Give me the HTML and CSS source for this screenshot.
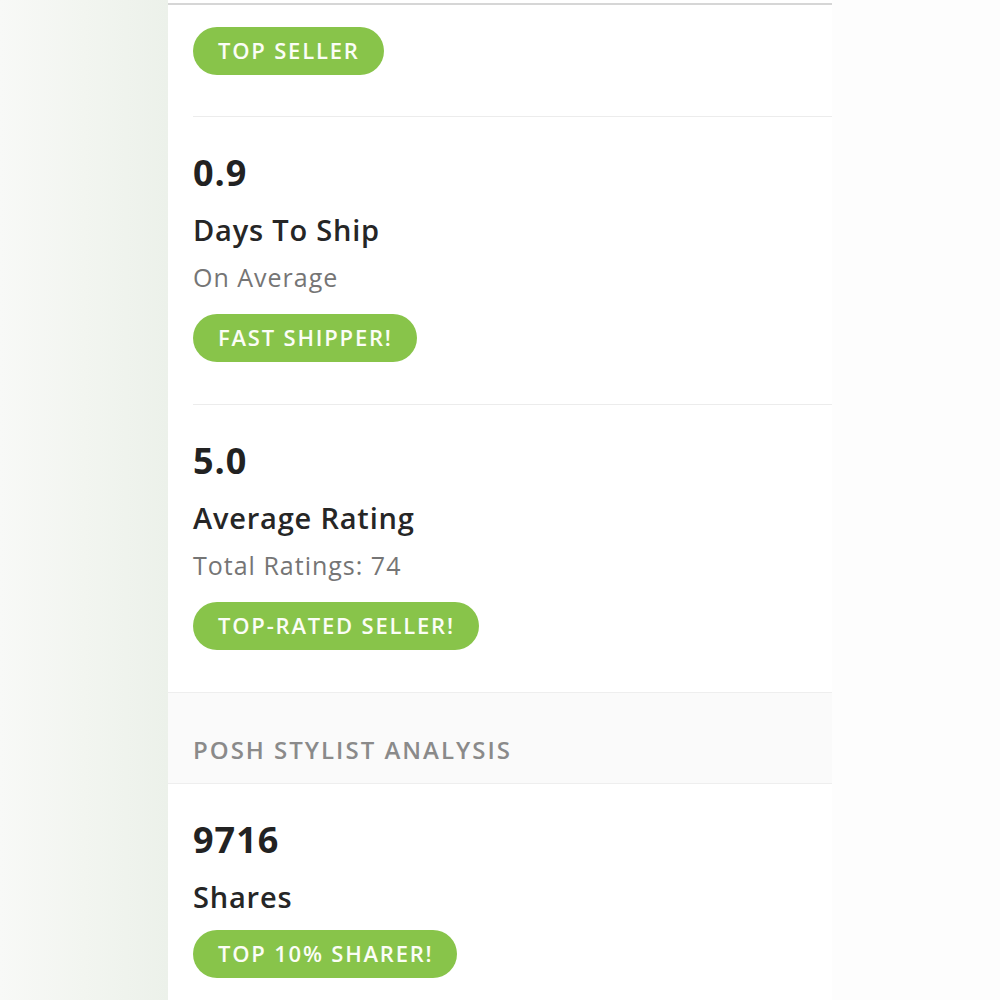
FILE: index.html
```html
<!DOCTYPE html>
<html>
<head>
<meta charset="utf-8">
<link rel="stylesheet" href="styles.css">
</head>
<body>
<div class="page">
  <div class="side side-left"></div>
  <main class="panel">
    <section class="block block-top">
      <span class="pill">TOP SELLER</span>
    </section>
    <section class="block">
      <div class="num">0.9</div>
      <div class="label">Days To Ship</div>
      <div class="sub">On Average</div>
      <span class="pill">FAST SHIPPER!</span>
    </section>
    <section class="block block-last">
      <div class="num">5.0</div>
      <div class="label">Average Rating</div>
      <div class="sub">Total Ratings: 74</div>
      <span class="pill">TOP-RATED SELLER!</span>
    </section>
    <div class="band">POSH STYLIST ANALYSIS</div>
    <section class="block block-last">
      <div class="num">9716</div>
      <div class="label label-tight">Shares</div>
      <span class="pill">TOP 10% SHARER!</span>
    </section>
  </main>
  <div class="side side-right"></div>
</div>
</body>
</html>
```
FILE: styles.css
```css
html, body {
  margin: 0;
  padding: 0;
  height: 1000px;
  overflow: hidden;
  font-family: "Open Sans", "Liberation Sans", sans-serif;
}
.page {
  display: flex;
  height: 1000px;
}
.side {
  width: 168px;
  flex: none;
}
.side-left {
  background: linear-gradient(to right, #f8f9f7 0%, #f2f5f0 50%, #ecf1ea 100%);
}
.side-right {
  background: #fdfdfd;
}
.panel {
  width: 664px;
  flex: none;
  background: #ffffff;
  border-top: 2px solid #d6d6d6;
  margin-top: 3px;
}
.block {
  margin-left: 25px;
  padding: 36px 0 42px;
  border-bottom: 1px solid #ececec;
  display: flex;
  flex-direction: column;
  align-items: flex-start;
}
.block-top {
  padding: 22px 0 41px;
}
.block-last {
  border-bottom: none;
}
.num {
  font-size: 36px;
  line-height: 40px;
  font-weight: 700;
  letter-spacing: 1px;
  color: #222222;
}
.label {
  margin-top: 20px;
  font-size: 29px;
  line-height: 34px;
  font-weight: 600;
  letter-spacing: 0.8px;
  color: #262626;
}
.sub {
  margin-top: 15px;
  font-size: 25px;
  line-height: 30px;
  letter-spacing: 1px;
  color: #757575;
}
.pill {
  margin-top: 22px;
  display: inline-flex;
  align-items: center;
  box-sizing: border-box;
  height: 48px;
  padding: 0 24px 3px 25px;
  border-radius: 24px;
  background: #88c44a;
  color: #fbfdf6;
  font-size: 22px;
  font-weight: 600;
  letter-spacing: 1.8px;
}
.block-top .pill {
  margin-top: 0;
}
.label-tight + .pill {
  margin-top: 16px;
}
.band {
  background: #fafafa;
  border-top: 1px solid #eeeeee;
  border-bottom: 1px solid #eeeeee;
  padding: 43px 25px 19px;
  font-size: 24px;
  line-height: 28px;
  font-weight: 600;
  letter-spacing: 2px;
  color: #8a8a8a;
}
```
